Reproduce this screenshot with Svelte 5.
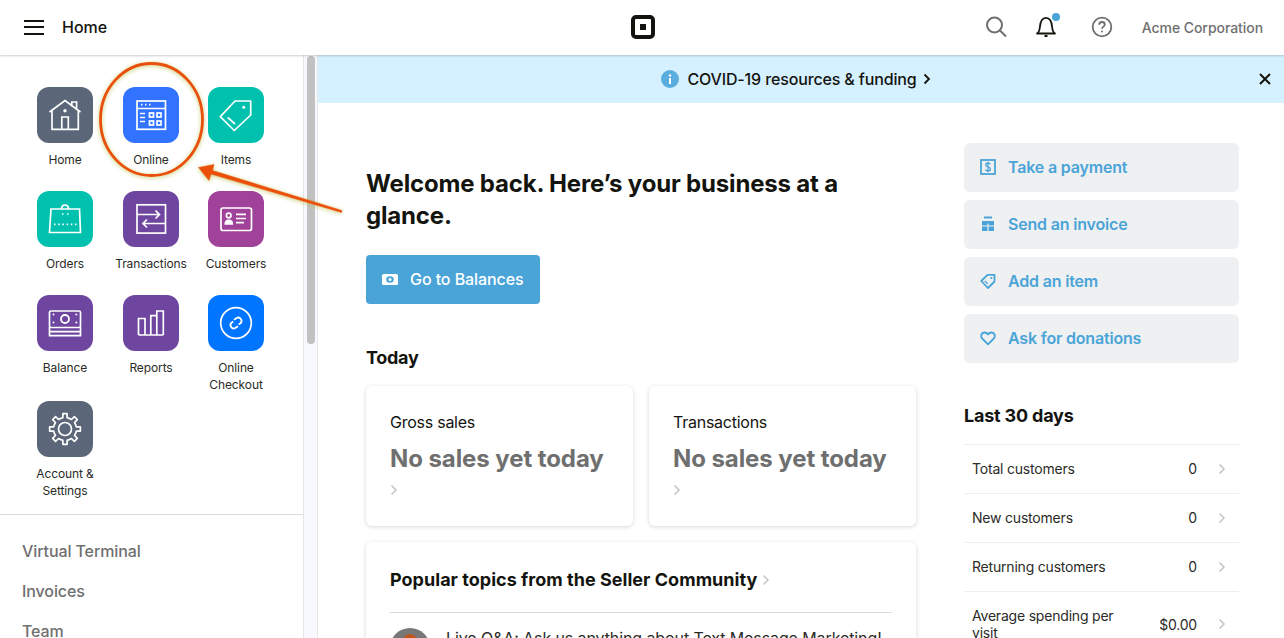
<script>
	// gear outline for the settings tile, 8 rounded teeth
	function gearPath(cx, cy, outer, inner, teeth) {
		const step = (Math.PI * 2) / teeth;
		let d = '';
		for (let i = 0; i < teeth; i++) {
			const a = i * step - Math.PI / 2;
			const pts = [
				[a - step * 0.5, inner],
				[a - step * 0.24, inner],
				[a - step * 0.17, outer],
				[a + step * 0.17, outer],
				[a + step * 0.24, inner]
			];
			for (const [ang, r] of pts) {
				const x = (cx + Math.cos(ang) * r).toFixed(2);
				const y = (cy + Math.sin(ang) * r).toFixed(2);
				d += (d ? 'L' : 'M') + x + ' ' + y;
			}
		}
		return d + 'Z';
	}

	const gear = gearPath(28, 28, 15.5, 11.5, 8);

	const tiles = [
		{ id: 'home', label: 'Home', color: '#5b6779' },
		{ id: 'online', label: 'Online', color: '#3172ff' },
		{ id: 'items', label: 'Items', color: '#00c1ae' },
		{ id: 'orders', label: 'Orders', color: '#00c1ae' },
		{ id: 'transactions', label: 'Transactions', color: '#6e469f' },
		{ id: 'customers', label: 'Customers', color: '#a0419a' },
		{ id: 'balance', label: 'Balance', color: '#6e469f' },
		{ id: 'reports', label: 'Reports', color: '#6e469f' },
		{ id: 'checkout', label: 'Online Checkout', color: '#0075ff' },
		{ id: 'settings', label: 'Account & Settings', color: '#5b6779' }
	];

	const navLinks = ['Virtual Terminal', 'Invoices', 'Team'];

	const actions = [
		{ id: 'payment', label: 'Take a payment' },
		{ id: 'invoice', label: 'Send an invoice' },
		{ id: 'item', label: 'Add an item' },
		{ id: 'donate', label: 'Ask for donations' }
	];

	const stats = [
		{ label: 'Total customers', value: '0' },
		{ label: 'New customers', value: '0' },
		{ label: 'Returning customers', value: '0' },
		{ label: 'Average spending per visit', value: '$0.00' }
	];

	const todayCards = ['Gross sales', 'Transactions'];
</script>

{#snippet chevron()}
	<svg class="chev" width="8" height="12" viewBox="0 0 8 12"><path d="M1.5 1.5 6 6l-4.5 4.5" /></svg>
{/snippet}

<div class="app">
	<header class="topbar">
		<div class="top-left">
			<button class="burger" aria-label="Menu"><span></span><span></span><span></span></button>
			<span class="page-name">Home</span>
		</div>
		<div class="logo"><span></span></div>
		<div class="top-right">
			<svg class="ico-search" width="24" height="24" viewBox="0 0 24 24" fill="none" stroke="#6f6f6f" stroke-width="2">
				<circle cx="10.5" cy="10" r="7.5" /><path d="m16 15.5 6 6" />
			</svg>
			<div class="bell">
				<svg width="24" height="24" viewBox="0 0 24 24" fill="none" stroke="#14140f" stroke-width="1.8">
					<path d="M3 18.5c2.2-1.5 2.6-3 2.9-6.5C6.3 7 7.500 2.800 12 2.800s5.700 4.200 6.100 9.200c.3 3.500.7 5 2.900 6.500Z" stroke-linejoin="round" />
					<path d="M10.500 21h3" stroke-width="2" />
				</svg>
				<span class="dot"></span>
			</div>
			<svg class="ico-help" width="22" height="22" viewBox="0 0 22 22" fill="none" stroke="#6f6f6f" stroke-width="1.8">
				<circle cx="11" cy="11" r="9.3" />
				<path d="M8.2 8.7c0-1.7 1.3-2.7 2.8-2.7s2.8 1 2.8 2.5c0 2.1-2.8 2.2-2.8 4.3" />
				<circle cx="11" cy="15.6" r="1" fill="#6f6f6f" stroke="none" />
			</svg>
			<span class="org">Acme Corporation</span>
		</div>
	</header>

	<div class="body">
		<aside class="sidebar">
			<div class="tile-grid">
				{#each tiles as tile (tile.id)}
					<div class="tile">
						<div class="tile-icon" style="background: {tile.color};">
							<svg width="56" height="56" viewBox="0 0 56 56" fill="none" stroke="#fff" stroke-width="1.7">
								{#if tile.id === 'home'}
									<path d="M12.5 25 28 13.5 43.5 25M15 23v19.3h26.3V23M24.8 42.3V30h6.5v12.3M34.8 19.500V15h4.800v8" />
									<circle cx="28" cy="23.7" r="1.7" fill="#fff" stroke="none" />
								{:else if tile.id === 'online'}
									<rect x="14" y="14" width="28.500" height="28.300" />
									<path d="M14 21.500h28.500M17 26.500h5M17 30.500h5M17 34.500h5" />
									<path d="M18 17.700h1.500M22 17.700h1.500M26 17.700h1.500" />
									<rect x="26.500" y="26" width="4" height="4" /><rect x="34" y="26" width="4" height="4" />
									<rect x="26.500" y="34" width="4" height="4" /><rect x="34" y="34" width="4" height="4" />
								{:else if tile.id === 'items'}
									<path d="M12.300 29.700 27 14h15.700v14L26.300 43.500Z" stroke-linejoin="round" />
									<path d="m19.700 30.300 7.300 6.700" />
									<circle cx="35.700" cy="20.300" r="1.500" fill="#fff" stroke="none" />
								{:else if tile.id === 'orders'}
									<path d="M14 18h28.500l1 23.500H12.500Z" />
									<path d="M24.500 18c0-5.300 7-5.300 7 0" />
									<path d="M17 33.300h22.500" stroke-dasharray="1.500 2.700" />
									<path d="M25 23h1.500M30 23h1.500" />
								{:else if tile.id === 'transactions'}
									<rect x="14" y="13.800" width="28.500" height="28.300" />
									<path d="M14 23.500h22.500M32.500 19.500l4 4-4 4" />
									<path d="M42.500 32.500H20M24 28.500l-4 4 4 4" />
								{:else if tile.id === 'customers'}
									<rect x="13" y="17" width="30.500" height="22.500" rx="2" />
									<circle cx="20.700" cy="24.500" r="2.300" />
									<path d="M17.300 33c0-5 7-5 7 0Z" fill="#fff" />
									<path d="M28 23.300h10M28 27.500h10M28 31.700h8" />
								{:else if tile.id === 'balance'}
									<rect x="12.500" y="16" width="31" height="16.500" rx="1.500" />
									<path d="M12.500 32v8.700h31V32M12.500 36.700h31" stroke-linejoin="round" />
									<circle cx="28" cy="24" r="4" stroke-width="1.800" />
									<circle cx="16.500" cy="19.500" r="1" fill="#fff" stroke="none" /><circle cx="16.500" cy="27.500" r="1" fill="#fff" stroke="none" />
									<circle cx="39.300" cy="19.500" r="1" fill="#fff" stroke="none" /><circle cx="39.300" cy="27.500" r="1" fill="#fff" stroke="none" />
								{:else if tile.id === 'reports'}
									<path d="M15.500 40V23.500H22V40M27.800 40V20.700h6V40M33.800 40V16h6.500v24M15.500 40h24.800" />
								{:else if tile.id === 'checkout'}
									<circle cx="28" cy="28" r="15.300" />
									<path d="M26 24.800l2.700-1.800a3.300 3.300 0 0 1 3.800 5.300l-1.800 1.300" stroke-width="1.800" />
									<path d="M30 31.200l-2.700 1.800a3.300 3.300 0 0 1-3.800-5.300l1.800-1.300" stroke-width="1.800" />
								{:else if tile.id === 'settings'}
									<path d={gear} stroke-linejoin="round" />
									<circle cx="28" cy="28" r="6.500" />
								{/if}
							</svg>
						</div>
						<span class="tile-label">{tile.label}</span>
					</div>
				{/each}
			</div>
			<nav class="side-nav">
				{#each navLinks as link (link)}
					<div class="side-link">{link}</div>
				{/each}
			</nav>
		</aside>

		<div class="scrollbar"><div class="thumb"></div></div>

		<main class="main">
			<div class="banner">
				<div class="banner-msg">
					<svg width="18" height="18" viewBox="0 0 18 18">
						<circle cx="9" cy="9" r="9" fill="#5aaede" />
						<rect x="8" y="8" width="2" height="6" fill="#fff" />
						<circle cx="9" cy="5.500" r="1.200" fill="#fff" />
					</svg>
					<span>COVID-19 resources &amp; funding</span>
					<svg class="banner-chev" width="8" height="12" viewBox="0 0 8 12" fill="none" stroke="#14140f" stroke-width="1.800"><path d="M1.500 1.500 6 6l-4.500 4.500" /></svg>
				</div>
				<svg class="close" width="12" height="12" viewBox="0 0 12 12" stroke="#14140f" stroke-width="2"><path d="m1 1 10 10M11 1 1 11" /></svg>
			</div>

			<div class="content">
				<section class="col-left">
					<h1>Welcome back. Here’s your business at a glance.</h1>
					<button class="primary">
						<svg width="16" height="11" viewBox="0 0 16 11"><rect width="16" height="11" rx="1.500" fill="#fff" /><ellipse cx="8" cy="5.500" rx="3.800" ry="3.200" fill="#4aa4d8" /><circle cx="8" cy="5.500" r="1.500" fill="#fff" /></svg>
						<span>Go to Balances</span>
					</button>

					<h2 class="today">Today</h2>
					<div class="today-cards">
						{#each todayCards as title (title)}
							<div class="card today-card">
								<div class="card-title">{title}</div>
								<div class="card-value">No sales yet today</div>
								{@render chevron()}
							</div>
						{/each}
					</div>

					<div class="card community">
						<h2>Popular topics from the Seller Community {@render chevron()}</h2>
						<div class="topic">
							<div class="avatar"><span></span></div>
							<p>Live Q&amp;A: Ask us anything about Text Message Marketing!</p>
						</div>
					</div>
				</section>

				<section class="col-right">
					<div class="actions">
						{#each actions as action (action.id)}
							<div class="action">
								<svg width="16" height="16" viewBox="0 0 16 16" fill="none" stroke="#4aa4d8" stroke-width="1.800">
									{#if action.id === 'payment'}
										<rect x="1" y="1" width="14" height="14" />
										<path d="M10.300 5.300C10 4.300 9 4 8 4c-1.300 0-2.300.6-2.300 1.900C5.700 8.500 10.400 7.500 10.400 10c0 1.300-1 2-2.400 2-1.200 0-2.200-.5-2.500-1.500M8 2.800v10.400" stroke-width="1.300" />
									{:else if action.id === 'invoice'}
										<path d="M4 1.500h8" stroke-width="2" />
										<rect x="2" y="5" width="12" height="10" fill="#4aa4d8" stroke="none" />
										<path d="M2 10h12M8 7.500v7.500" stroke="#eff0f2" stroke-width="1.200" />
									{:else if action.id === 'item'}
										<path d="M1.300 8 7.500 1.800h7v6.700L8 15Z" stroke-linejoin="round" />
										<circle cx="11.300" cy="5" r="1.100" fill="#4aa4d8" stroke="none" />
										<path d="m4.800 8 3 2.800" stroke-width="1.300" />
									{:else}
										<path d="M8 14.300 2.200 8.500C.3 6.600 1.300 2.500 4.500 2.500 6 2.500 7.300 3.300 8 4.500c.7-1.200 2-2 3.500-2 3.200 0 4.200 4.100 2.300 6Z" stroke-linejoin="round" />
									{/if}
								</svg>
								<span>{action.label}</span>
							</div>
						{/each}
					</div>

					<h2 class="last30">Last 30 days</h2>
					<div class="stats">
						{#each stats as stat (stat.label)}
							<div class="stat">
								<span class="stat-label">{stat.label}</span>
								<span class="stat-value">{stat.value}</span>
								{@render chevron()}
							</div>
						{/each}
					</div>
				</section>
			</div>
		</main>
	</div>

	<!-- hand-drawn annotation on top of the screenshot -->
	<svg class="annotation" width="360" height="230" viewBox="0 0 360 230" fill="none">
		<ellipse cx="151.500" cy="119.500" rx="51" ry="56" stroke="#e9500c" stroke-width="2.800" />
		<path d="M198.500 167.500 214 164.500 212.500 170.500 342 210.500 341.500 212.500 211 174 209 180.500Z" fill="#ea500a" stroke="#ea500a" stroke-width="0.500" stroke-linejoin="round" />
	</svg>
</div>

<style>
	:global(body) {
		margin: 0;
		background: #fff;
	}

	.app {
		position: relative;
		display: flex;
		flex-direction: column;
		height: 638px;
		overflow: hidden;
		font-family: Inter, 'Liberation Sans', sans-serif;
		color: #14140f;
	}

	.topbar {
		flex: 0 0 55px;
		box-sizing: border-box;
		position: relative;
		display: grid;
		grid-template-columns: 1fr auto 1fr;
		align-items: center;
		padding: 0 21px 1px 24px;
		box-shadow: 0 1px 2px rgba(0, 0, 0, 0.2);
		z-index: 1;
	}

	.top-left {
		display: flex;
		align-items: center;
		gap: 18px;
	}

	.burger {
		display: flex;
		flex-direction: column;
		gap: 4.5px;
		width: 20px;
		padding: 0;
		border: 0;
		background: none;
	}

	.burger span {
		height: 2px;
		background: #14140f;
	}

	.page-name {
		font-size: 16px;
		font-weight: 500;
	}

	.logo {
		display: flex;
		align-items: center;
		justify-content: center;
		width: 16px;
		height: 16px;
		margin-left: -2px;
		border: 4px solid #14140f;
		border-radius: 5px;
	}

	.logo span {
		width: 6px;
		height: 6px;
		background: #14140f;
	}

	.top-right {
		display: flex;
		align-items: center;
		justify-content: flex-end;
	}

	.ico-search {
		margin-right: 26px;
	}

	.bell {
		position: relative;
		display: flex;
		margin-right: 33px;
	}

	.dot {
		position: absolute;
		top: -2px;
		right: -2px;
		width: 8px;
		height: 8px;
		border-radius: 50%;
		background: #4aa4d8;
	}

	.ico-help {
		margin-right: 29px;
	}

	.org {
		font-size: 14px;
		font-weight: 500;
		letter-spacing: -0.06px;
		color: #6f6f6f;
	}

	.body {
		flex: 1;
		display: flex;
		min-height: 0;
	}

	.sidebar {
		flex: 0 0 303px;
	}

	.tile-grid {
		display: grid;
		grid-template-columns: 86px 86px 84px;
		grid-auto-rows: minmax(104px, auto);
		padding: 32px 0 7px 22px;
		border-bottom: 1px solid #dadada;
	}

	.tile {
		display: flex;
		flex-direction: column;
		align-items: center;
		padding-bottom: 8px;
		text-align: center;
	}

	.tile-icon {
		width: 56px;
		height: 56px;
		border-radius: 12px;
	}

	.tile-icon svg {
		display: block;
	}

	.tile-label {
		margin-top: 8px;
		width: 84px;
		font-size: 12px;
		letter-spacing: -0.1px;
		line-height: 17px;
		color: #2b2b27;
	}

	.side-nav {
		padding: 16px 22px 0;
	}

	.side-link {
		height: 40px;
		font-size: 16px;
		font-weight: 500;
		letter-spacing: -0.1px;
		line-height: 40px;
		color: #6f6f6f;
	}

	.scrollbar {
		flex: 0 0 15px;
		box-sizing: border-box;
		padding: 1px 2px 0 3px;
		background: #f8f9fe;
		border-left: 1px solid #e6e6e8;
		border-right: 1px solid #e6e6e8;
	}

	.thumb {
		width: 8px;
		height: 288px;
		border-radius: 4px;
		background: #c1c1c1;
	}

	.main {
		flex: 1;
		min-width: 0;
	}

	.banner {
		position: relative;
		display: flex;
		align-items: center;
		justify-content: center;
		height: 48px;
		padding-right: 10px;
		box-sizing: border-box;
		background: #d5f0ff;
	}

	.banner-msg {
		display: flex;
		align-items: center;
		gap: 8px;
		font-size: 16px;
		font-weight: 500;
		letter-spacing: -0.14px;
	}

	.banner-chev {
		margin-left: -2px;
	}

	.close {
		position: absolute;
		right: 13px;
		top: 18px;
	}

	.content {
		display: flex;
		gap: 48px;
		padding: 40px 0 0 48px;
	}

	.col-left {
		flex: 0 0 550px;
		padding-top: 25px;
	}

	h1 {
		margin: 0 0 23px;
		font-size: 24px;
		font-weight: 700;
		letter-spacing: -0.18px;
		line-height: 32px;
	}

	h2 {
		margin: 0;
		font-size: 18px;
		font-weight: 700;
		line-height: 24px;
	}

	.primary {
		display: flex;
		align-items: center;
		gap: 12px;
		height: 49px;
		padding: 0 16px 1px;
		border: 0;
		border-radius: 4px;
		background: #4aa4d8;
		color: #fff;
		font: 500 16px Inter, 'Liberation Sans', sans-serif;
		letter-spacing: -0.08px;
	}

	.today {
		margin: 42px 0 16px;
		letter-spacing: -0.3px;
	}

	.today-cards {
		display: flex;
		gap: 16px;
		margin-bottom: 16px;
	}

	.card {
		border-radius: 6px;
		background: #fff;
		box-shadow: 0 1px 4px rgba(0, 0, 0, 0.16);
	}

	.today-card {
		flex: 1;
		height: 140px;
		box-sizing: border-box;
		padding: 24px;
	}

	.card-title {
		font-size: 16px;
		letter-spacing: -0.25px;
		line-height: 24px;
	}

	.card-value {
		margin: 9px 0 5px;
		font-size: 24px;
		font-weight: 700;
		letter-spacing: -0.08px;
		line-height: 32px;
		color: #6f6f6f;
	}

	.chev {
		fill: none;
		stroke: #c4c4c4;
		stroke-width: 1.5;
	}

	.community {
		padding: 26px 24px 0;
	}

	.community h2 {
		padding-bottom: 20px;
		border-bottom: 1px solid #dadada;
		letter-spacing: 0.03px;
	}

	.topic {
		display: flex;
		gap: 16px;
		padding-top: 15px;
	}

	.avatar {
		flex: 0 0 40px;
		height: 40px;
		border-radius: 50%;
		background: #777;
		display: flex;
		justify-content: center;
		padding-top: 6px;
		box-sizing: border-box;
	}

	.avatar span {
		width: 14px;
		height: 14px;
		border-radius: 50%;
		background: #c0561f;
	}

	.topic p {
		margin: 0;
		font-size: 16px;
		letter-spacing: -0.1px;
		line-height: 20px;
		color: #2b2b27;
	}

	.col-right {
		flex: 0 0 275px;
	}

	.actions {
		display: flex;
		flex-direction: column;
		gap: 8px;
	}

	.action {
		display: flex;
		align-items: center;
		gap: 12px;
		height: 49px;
		box-sizing: border-box;
		padding: 0 0 2px 16px;
		border-radius: 6px;
		background: #eff0f2;
		color: #4aa4d8;
		font-size: 16px;
		font-weight: 600;
		letter-spacing: -0.18px;
	}

	.last30 {
		margin: 41px 0 16px;
		letter-spacing: -0.2px;
	}

	.stats {
		border-top: 1px solid #eeeeee;
	}

	.stat {
		display: flex;
		align-items: center;
		padding: 15px 13px 16px 8px;
		border-bottom: 1px solid #eeeeee;
		font-size: 14px;
		letter-spacing: -0.2px;
		line-height: 17px;
		color: #2b2b27;
	}

	.stat-label {
		flex: 1;
		padding-right: 24px;
	}

	.stat-value {
		margin-right: 21px;
	}

	.annotation {
		position: absolute;
		top: 0;
		left: 0;
		pointer-events: none;
		filter: drop-shadow(0 1px 2px rgba(180, 185, 60, 0.75));
	}
</style>
